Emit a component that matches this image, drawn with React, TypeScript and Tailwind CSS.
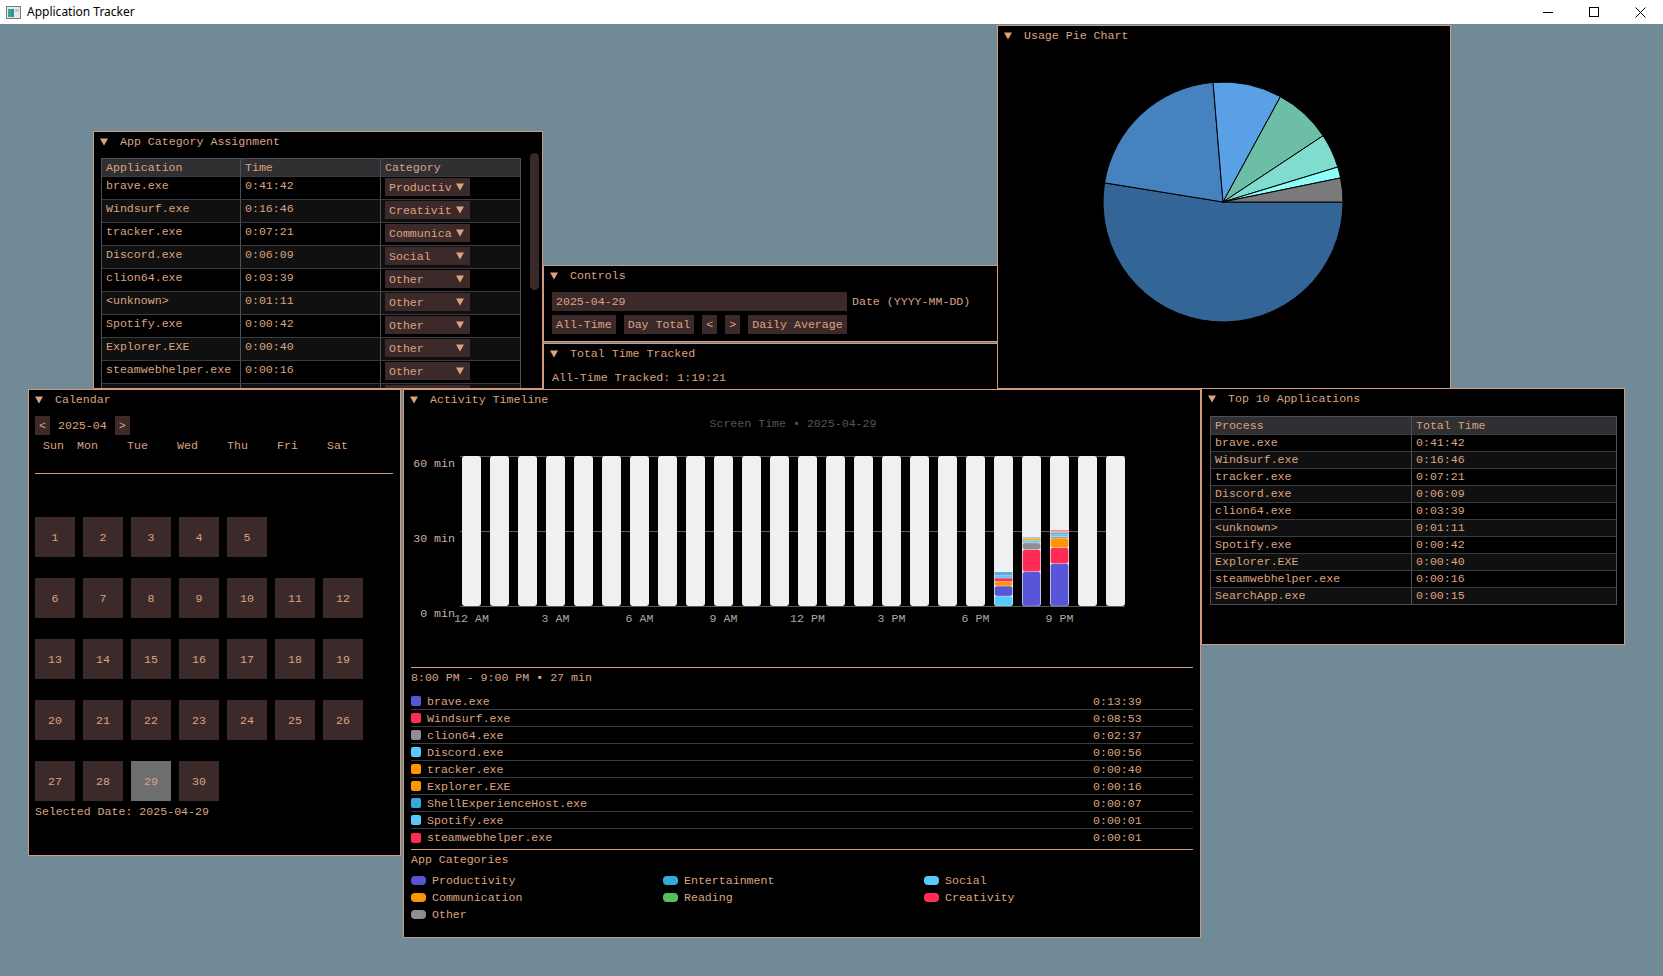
import type { ReactNode } from "react";

const CAT = {
  prod: "#5856d6",
  ent: "#34aadc",
  soc: "#5ac8fa",
  com: "#ff9500",
  read: "#4cd964",
  cre: "#ff2d55",
  oth: "#8e8e93",
};

const APPS = [
  { name: "brave.exe", time: "0:41:42", cat: "Productiv" },
  { name: "Windsurf.exe", time: "0:16:46", cat: "Creativit" },
  { name: "tracker.exe", time: "0:07:21", cat: "Communica" },
  { name: "Discord.exe", time: "0:06:09", cat: "Social" },
  { name: "clion64.exe", time: "0:03:39", cat: "Other" },
  { name: "<unknown>", time: "0:01:11", cat: "Other" },
  { name: "Spotify.exe", time: "0:00:42", cat: "Other" },
  { name: "Explorer.EXE", time: "0:00:40", cat: "Other" },
  { name: "steamwebhelper.exe", time: "0:00:16", cat: "Other" },
  { name: "SearchApp.exe", time: "0:00:15", cat: "Other" },
];

const HOUR = [
  { name: "brave.exe", color: CAT.prod, time: "0:13:39" },
  { name: "Windsurf.exe", color: CAT.cre, time: "0:08:53" },
  { name: "clion64.exe", color: CAT.oth, time: "0:02:37" },
  { name: "Discord.exe", color: CAT.soc, time: "0:00:56" },
  { name: "tracker.exe", color: CAT.com, time: "0:00:40" },
  { name: "Explorer.EXE", color: CAT.com, time: "0:00:16" },
  { name: "ShellExperienceHost.exe", color: CAT.ent, time: "0:00:07" },
  { name: "Spotify.exe", color: CAT.soc, time: "0:00:01" },
  { name: "steamwebhelper.exe", color: CAT.cre, time: "0:00:01" },
];

const LEGEND = [
  { label: "Productivity", color: CAT.prod },
  { label: "Entertainment", color: CAT.ent },
  { label: "Social", color: CAT.soc },
  { label: "Communication", color: CAT.com },
  { label: "Reading", color: "#52c15c" },
  { label: "Creativity", color: CAT.cre },
  { label: "Other", color: CAT.oth },
];

// stacked segments (bottom-up) in px, 2.5px per minute
const STACKS: Record<number, [string, number][]> = {
  19: [[CAT.soc, 10], [CAT.prod, 10], [CAT.com, 4.5], [CAT.cre, 3.5], [CAT.soc, 3], [CAT.prod, 1], [CAT.ent, 2]],
  20: [[CAT.prod, 34.5], [CAT.cre, 22], [CAT.oth, 6.8], [CAT.soc, 2.3], [CAT.com, 1.7], [CAT.com, 0.8], [CAT.ent, 0.6]],
  21: [[CAT.prod, 42.5], [CAT.cre, 16], [CAT.com, 9.5], [CAT.oth, 1.5], [CAT.soc, 2.5], [CAT.ent, 1.5], [CAT.com, 1.2], [CAT.cre, 1]],
};

const PIE = [
  { v: 2502, c: "#336596" },
  { v: 1006, c: "#4682c0" },
  { v: 441, c: "#5aa0e6" },
  { v: 369, c: "#6dbea6" },
  { v: 219, c: "#80dccf" },
  { v: 71, c: "#8cfffb" },
  { v: 153, c: "#7a7a7a" },
];

const HOUR_LABELS: Record<number, string> = {
  0: "12 AM",
  3: "3 AM",
  6: "6 AM",
  9: "9 AM",
  12: "12 PM",
  15: "3 PM",
  18: "6 PM",
  21: "9 PM",
};

const WEEKS = [
  [1, 2, 3, 4, 5],
  [6, 7, 8, 9, 10, 11, 12],
  [13, 14, 15, 16, 17, 18, 19],
  [20, 21, 22, 23, 24, 25, 26],
  [27, 28, 29, 30],
];

function Tri() {
  return (
    <svg width="8" height="8" viewBox="0 0 8 8" className="shrink-0">
      <path d="M0 0.5 H8 L4 7.5 Z" fill="#dba380" />
    </svg>
  );
}

function Win({ title, className, children }: { title: string; className: string; children?: ReactNode }) {
  return (
    <div className={`absolute overflow-hidden border border-[#cf9b7c] bg-black ${className}`}>
      <div className="flex h-[19px] items-center pl-[6px]">
        <Tri />
        <span className="ml-[12px] whitespace-nowrap">{title}</span>
      </div>
      {children}
    </div>
  );
}

function Combo({ label }: { label: string }) {
  return (
    <div className="flex h-[18px] w-[85px] items-center bg-[#3c2a2a] pl-[4px]">
      <span className="w-[64px] overflow-hidden whitespace-nowrap">{label}</span>
      <span className="ml-[3px]">
        <Tri />
      </span>
    </div>
  );
}

function CategoryWindow() {
  return (
    <Win title="App Category Assignment" className="left-[93px] top-[107px] h-[258px] w-[450px]">
      <div className="flex items-start pl-[7px] pt-[7px]">
        <div className="w-[420px] border border-[#4f4f59]">
          <div className="grid h-[17px] grid-cols-[139px_140px_139px] items-center bg-[#303033]">
            <div className="h-full border-r border-[#4f4f59] pl-[4px] leading-[17px]">Application</div>
            <div className="h-full border-r border-[#4f4f59] pl-[4px] leading-[17px]">Time</div>
            <div className="pl-[4px]">Category</div>
          </div>
          {APPS.map((a, i) => (
            <div
              key={a.name}
              className={`grid h-[23px] grid-cols-[139px_140px_139px] border-t border-[#3b3b40] ${
                i % 2 ? "bg-[#101010]" : ""
              }`}
            >
              <div className="border-r border-[#4f4f59] pl-[4px] pt-[2px] whitespace-nowrap">{a.name}</div>
              <div className="border-r border-[#4f4f59] pl-[4px] pt-[2px]">{a.time}</div>
              <div className="pl-[4px] pt-[1px]">
                <Combo label={a.cat} />
              </div>
            </div>
          ))}
        </div>
        <div className="-mt-[5px] ml-[9px] h-[137px] w-[9px] rounded-full bg-[#3a2929]" />
      </div>
    </Win>
  );
}

function ControlsWindow() {
  const buttons = ["All-Time", "Day Total", "<", ">", "Daily Average"];
  return (
    <Win title="Controls" className="left-[543px] top-[241px] h-[77px] w-[455px]">
      <div className="flex flex-col gap-[4px] pl-[8px] pt-[7px]">
        <div className="flex items-center">
          <div className="flex h-[19px] w-[295px] items-center bg-[#3c2a2a] pl-[4px]">2025-04-29</div>
          <span className="ml-[5px]">Date (YYYY-MM-DD)</span>
        </div>
        <div className="flex gap-[8px]">
          {buttons.map((b) => (
            <div key={b} className="flex h-[19px] items-center bg-[#3c2a2a] px-[4px] whitespace-pre">
              {b}
            </div>
          ))}
        </div>
      </div>
    </Win>
  );
}

function TotalWindow() {
  return (
    <Win title="Total Time Tracked" className="left-[543px] top-[319px] h-[48px] w-[455px]">
      <div className="pl-[8px] pt-[8px]">All-Time Tracked: 1:19:21</div>
    </Win>
  );
}

function PieWindow() {
  const cx = 226;
  const cy = 177;
  const r = 120;
  const total = PIE.reduce((s, p) => s + p.v, 0);
  let a = 0;
  const slices = PIE.map((p) => {
    const a0 = a;
    const a1 = a + (p.v / total) * Math.PI * 2;
    a = a1;
    const x0 = cx + r * Math.cos(a0);
    const y0 = cy + r * Math.sin(a0);
    const x1 = cx + r * Math.cos(a1);
    const y1 = cy + r * Math.sin(a1);
    const large = a1 - a0 > Math.PI ? 1 : 0;
    return { d: `M${cx} ${cy} L${x0} ${y0} A${r} ${r} 0 ${large} 1 ${x1} ${y1} Z`, c: p.c };
  });
  return (
    <Win title="Usage Pie Chart" className="left-[997px] top-[1px] h-[364px] w-[454px]">
      <svg width="452" height="343" viewBox="1 20 452 343">
        {slices.map((s, i) => (
          <path key={i} d={s.d} fill={s.c} stroke="#000" strokeWidth="1" strokeLinejoin="round" />
        ))}
      </svg>
    </Win>
  );
}

function TopWindow() {
  return (
    <Win title="Top 10 Applications" className="left-[1201px] top-[364px] h-[257px] w-[424px]">
      <div className="pl-[8px] pt-[8px]">
        <div className="w-[407px] border border-[#4f4f59]">
          <div className="grid h-[17px] grid-cols-[201px_1fr] bg-[#303033] leading-[17px]">
            <div className="border-r border-[#4f4f59] pl-[4px]">Process</div>
            <div className="pl-[4px]">Total Time</div>
          </div>
          {APPS.map((a, i) => (
            <div
              key={a.name}
              className={`grid h-[17px] grid-cols-[201px_1fr] border-t border-[#3b3b40] leading-[16px] ${
                i % 2 ? "bg-[#101010]" : ""
              }`}
            >
              <div className="border-r border-[#4f4f59] pl-[4px] whitespace-nowrap">{a.name}</div>
              <div className="pl-[4px]">{a.time}</div>
            </div>
          ))}
        </div>
      </div>
    </Win>
  );
}

function CalendarWindow() {
  const days = [
    { d: "Sun", w: "w-[34px]" },
    { d: "Mon", w: "w-[50px]" },
    { d: "Tue", w: "w-[50px]" },
    { d: "Wed", w: "w-[50px]" },
    { d: "Thu", w: "w-[50px]" },
    { d: "Fri", w: "w-[50px]" },
    { d: "Sat", w: "w-[50px]" },
  ];
  return (
    <Win title="Calendar" className="left-[28px] top-[365px] h-[467px] w-[373px]">
      <div className="flex flex-col pl-[6px] pt-[7px]">
        <div className="flex h-[19px] items-center">
          <div className="flex h-[19px] w-[15px] items-center justify-center bg-[#3c2a2a]">&lt;</div>
          <span className="ml-[8px]">2025-04</span>
          <div className="ml-[8px] flex h-[19px] w-[15px] items-center justify-center bg-[#3c2a2a]">&gt;</div>
        </div>
        <div className="mt-[4px] flex h-[13px] pl-[8px]">
          {days.map((x) => (
            <span key={x.d} className={x.w}>
              {x.d}
            </span>
          ))}
        </div>
        <div className="mt-[21px] h-px w-[358px] bg-[#cf9b7c]" />
        <div className="mt-[43px] flex flex-col gap-[21px]">
          {WEEKS.map((week, wi) => (
            <div key={wi} className="flex gap-[8px]">
              {week.map((d) => (
                <div
                  key={d}
                  className={`flex h-[40px] w-[40px] items-center justify-center ${
                    d === 29 ? "bg-[#6e6e6e]" : "bg-[#3c2a2a]"
                  }`}
                >
                  {d}
                </div>
              ))}
            </div>
          ))}
        </div>
        <div className="mt-[4px]">Selected Date: 2025-04-29</div>
      </div>
    </Win>
  );
}

function TimelineChart() {
  const bars = Array.from({ length: 24 }, (_, i) => i);
  return (
    <svg
      width="796"
      height="226"
      viewBox="1 20 796 226"
      fontFamily="'Liberation Mono', monospace"
      fontSize="11.6"
    >
      <text x="390" y="34" textAnchor="middle" dominantBaseline="central" fill="#555555">
        Screen Time ▪ 2025-04-29
      </text>
      {[
        { y: 67, l: "60 min" },
        { y: 142, l: "30 min" },
        { y: 217, l: "0 min" },
      ].map((g) => (
        <g key={g.l}>
          <line x1="57" x2="722" y1={g.y + 0.5} y2={g.y + 0.5} stroke="#5a5a5a" strokeWidth="1" />
          <text x="52" y={g.y + 7} textAnchor="end" dominantBaseline="central" fill="#c9b2a2">
            {g.l}
          </text>
        </g>
      ))}
      {bars.map((i) => {
        const x = 59 + 28 * i;
        const stack = STACKS[i];
        let cur = 217;
        return (
          <g key={i}>
            <rect x={x} y={67} width={19} height={150} rx={3} fill="#f0f0f0" />
            {stack &&
              stack.map(([c, h], k) => {
                const y = cur - h;
                cur = y;
                return (
                  <rect
                    key={k}
                    x={x + 0.5}
                    y={y}
                    width={18}
                    height={h}
                    rx={h > 4 ? 2.5 : 0.5}
                    fill={c}
                    stroke="#e8e4f4"
                    strokeOpacity="0.55"
                    strokeWidth="0.6"
                  />
                );
              })}
            {HOUR_LABELS[i] && (
              <text x={x + 9.5} y={229} textAnchor="middle" dominantBaseline="central" fill="#a9a9a9">
                {HOUR_LABELS[i]}
              </text>
            )}
          </g>
        );
      })}
    </svg>
  );
}

function TimelineWindow() {
  return (
    <Win title="Activity Timeline" className="left-[403px] top-[365px] h-[549px] w-[798px]">
      <TimelineChart />
      <div className="flex flex-col px-[7px]">
        <div className="mt-[32px] h-px w-[782px] bg-[#cf9b7c]" />
        <div className="mt-[3px] h-[13px]">8:00 PM - 9:00 PM ▪ 27 min</div>
        <div className="mt-[9px] flex flex-col">
          {HOUR.map((h, i) => (
            <div
              key={h.name}
              className={`flex h-[17px] items-center ${i < HOUR.length - 1 ? "border-b border-[#3b3b40]" : ""}`}
            >
              <span className="h-[10px] w-[10px] shrink-0 rounded-[2px]" style={{ background: h.color }} />
              <span className="ml-[6px] w-[666px] whitespace-nowrap">{h.name}</span>
              <span>{h.time}</span>
            </div>
          ))}
        </div>
        <div className="mt-[3px] h-px w-[782px] bg-[#cf9b7c]" />
        <div className="mt-[3px] h-[13px]">App Categories</div>
        <div className="mt-[6px] grid grid-cols-[252px_261px_1fr]">
          {LEGEND.map((l) => (
            <div key={l.label} className="flex h-[17px] items-center">
              <span className="h-[9px] w-[15px] shrink-0 rounded-[4px]" style={{ background: l.color }} />
              <span className="ml-[6px]">{l.label}</span>
            </div>
          ))}
        </div>
      </div>
    </Win>
  );
}

function TitleBar() {
  return (
    <div className="flex h-[24px] shrink-0 items-center bg-white font-['Noto_Sans',sans-serif] text-[12px] text-black">
      <svg width="15" height="13" viewBox="0 0 15 13" className="ml-[6px]">
        <rect x="0.5" y="0.5" width="14" height="12" fill="#e8e8e8" stroke="#7a7a7a" />
        <rect x="2" y="3" width="6" height="8" fill="#2f8fb0" />
        <rect x="2" y="3" width="3" height="8" fill="#3aa58a" />
        <rect x="9" y="3" width="4" height="3" fill="#c8c8c8" />
      </svg>
      <span className="ml-[6px]">Application Tracker</span>
      <div className="ml-auto flex h-full">
        <div className="flex w-[46px] items-center justify-center">
          <svg width="10" height="10" viewBox="0 0 10 10">
            <line x1="0" x2="10" y1="5.5" y2="5.5" stroke="#000" />
          </svg>
        </div>
        <div className="flex w-[46px] items-center justify-center">
          <svg width="10" height="10" viewBox="0 0 10 10">
            <rect x="0.5" y="0.5" width="9" height="9" fill="none" stroke="#000" />
          </svg>
        </div>
        <div className="flex w-[46px] items-center justify-center">
          <svg width="11" height="11" viewBox="0 0 11 11">
            <path d="M0.5 0.5 L10.5 10.5 M10.5 0.5 L0.5 10.5" stroke="#000" />
          </svg>
        </div>
      </div>
    </div>
  );
}

export default function App() {
  return (
    <div className="flex h-[976px] w-[1663px] flex-col overflow-hidden bg-[#718a97]">
      <TitleBar />
      <div className="relative flex-1 font-['Liberation_Mono',monospace] text-[11.6px] leading-[13px] text-[#dba380]">
        <CategoryWindow />
        <ControlsWindow />
        <TotalWindow />
        <PieWindow />
        <TopWindow />
        <CalendarWindow />
        <TimelineWindow />
      </div>
    </div>
  );
}
